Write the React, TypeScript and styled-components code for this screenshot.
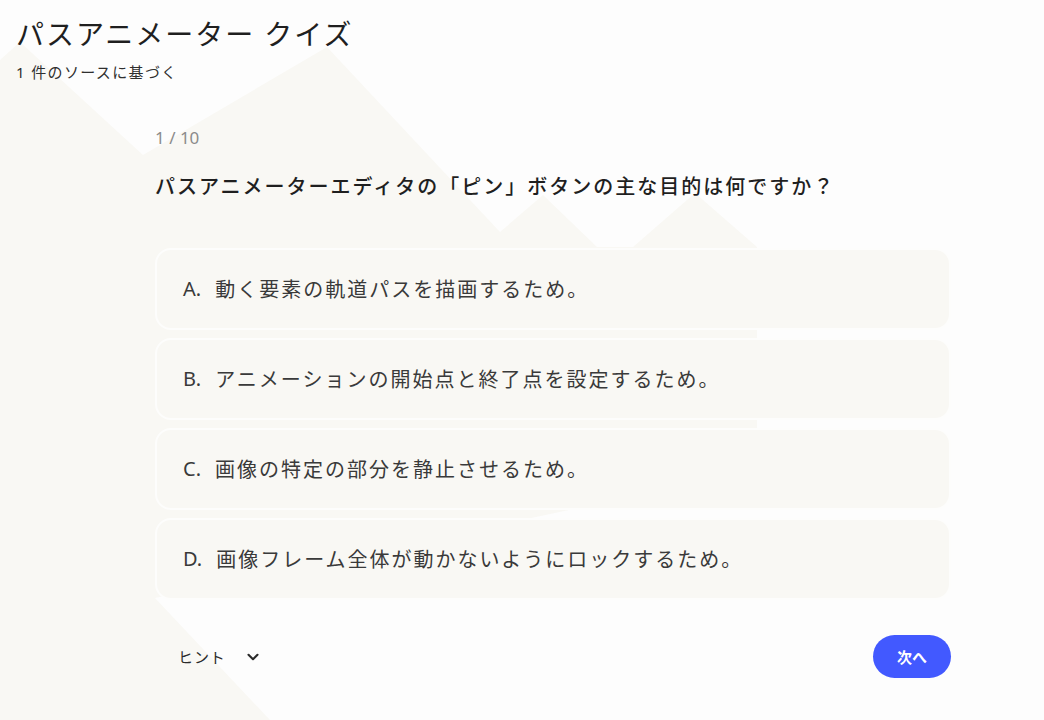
import styled, { createGlobalStyle } from "styled-components";
import { ChevronDown } from "lucide-react";

const GlobalStyle = createGlobalStyle`
  html, body {
    margin: 0;
    padding: 0;
    background: #fdfdfd;
  }
  body {
    font-family: "Noto Sans", "Noto Sans CJK JP", sans-serif;
    color: #1f1f1f;
  }
`;

const options = [
  { key: "A", text: "動く要素の軌道パスを描画するため。" },
  { key: "B", text: "アニメーションの開始点と終了点を設定するため。" },
  { key: "C", text: "画像の特定の部分を静止させるため。" },
  { key: "D", text: "画像フレーム全体が動かないようにロックするため。" },
];

function Backdrop() {
  return (
    <BackdropSvg viewBox="0 0 1044 720" preserveAspectRatio="none">
      <polygon
        points="0,60 20,42 143,155 327,47 500,232 543,195 597,247 633,247 695,193 757,247 757,470 155,598 270,720 0,720"
        fill="#f9f8f4"
      />
    </BackdropSvg>
  );
}

export default function App() {
  return (
    <>
      <GlobalStyle />
      <Page>
        <Backdrop />
        <Header>
          <Title>パスアニメーター クイズ</Title>
          <Subtitle>1 件のソースに基づく</Subtitle>
        </Header>
        <Quiz>
          <Counter>1 / 10</Counter>
          <Question>パスアニメーターエディタの「ピン」ボタンの主な目的は何ですか？</Question>
          <OptionList>
            {options.map((o) => (
              <OptionCard key={o.key}>
                <OptionKey>{o.key}.</OptionKey>
                <span>{o.text}</span>
              </OptionCard>
            ))}
          </OptionList>
          <Footer>
            <HintButton>
              ヒント
              <ChevronDown size={18} strokeWidth={2.8} />
            </HintButton>
            <NextButton>次へ</NextButton>
          </Footer>
        </Quiz>
      </Page>
    </>
  );
}

const Page = styled.div`
  position: relative;
  width: 1044px;
  height: 720px;
  overflow: hidden;
`;

const BackdropSvg = styled.svg`
  position: absolute;
  inset: 0;
  width: 100%;
  height: 100%;
  z-index: 0;
`;

const Header = styled.header`
  position: relative;
  z-index: 1;
  padding: 14px 16px 0;
`;

const Title = styled.h1`
  margin: 0;
  font-size: 28px;
  font-weight: 400;
  line-height: 40px;
  letter-spacing: 0.07em;
  color: #1f1f1f;
`;

const Subtitle = styled.div`
  margin-top: 8px;
  font-size: 15px;
  line-height: 20px;
  letter-spacing: 0.09em;
  color: #2f2f2f;
`;

const Quiz = styled.main`
  position: relative;
  z-index: 1;
  margin: 44px 0 0 155px;
  width: 796px;
`;

const Counter = styled.div`
  font-size: 17px;
  line-height: 24px;
  color: #8b8b8b;
`;

const Question = styled.h2`
  margin: 22px 0 0;
  font-size: 20px;
  font-weight: 500;
  line-height: 30px;
  letter-spacing: 0.1em;
  color: #1f1f1f;
`;

const OptionList = styled.div`
  margin-top: 46px;
  display: flex;
  flex-direction: column;
  gap: 8px;
`;

const OptionCard = styled.div`
  box-sizing: border-box;
  height: 82px;
  display: flex;
  align-items: center;
  padding: 0 26px 2px;
  background: #f9f8f4;
  border: 2px solid #fdfdfc;
  border-radius: 16px;
  font-size: 20px;
  letter-spacing: 0.1em;
  color: #3a3a3a;
`;

const OptionKey = styled.span`
  margin-right: 14px;
  letter-spacing: 0;
`;

const Footer = styled.div`
  margin-top: 35px;
  display: flex;
  align-items: center;
  justify-content: space-between;
`;

const HintButton = styled.button`
  display: flex;
  align-items: center;
  gap: 18px;
  padding: 0 0 0 23px;
  border: none;
  background: transparent;
  font-family: inherit;
  font-size: 15px;
  letter-spacing: 0.06em;
  color: #2b2b2b;
  cursor: pointer;

  svg {
    color: #2b2b2b;
  }
`;

const NextButton = styled.button`
  width: 78px;
  height: 43px;
  border: none;
  border-radius: 22px;
  background: #4259ff;
  color: #ffffff;
  font-family: inherit;
  font-size: 15px;
  font-weight: 600;
  cursor: pointer;
`;
